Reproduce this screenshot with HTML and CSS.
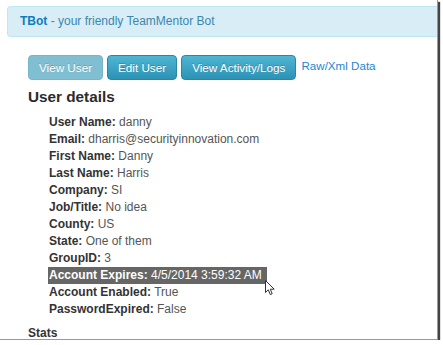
FILE: index.html
```html
<!DOCTYPE html>
<html>
<head>
<meta charset="utf-8">
<link rel="stylesheet" href="styles.css">
</head>
<body>
<div class="shot">
  <div class="alert"><a class="brand">TBot</a> - your friendly TeamMentor Bot</div>
  <div class="content">
    <div class="toolbar">
      <button class="btn btn-active">View User</button>
      <button class="btn">Edit User</button>
      <button class="btn">View Activity/Logs</button>
      <a class="raw">Raw/Xml Data</a>
    </div>
    <h3 class="heading">User details</h3>
    <ul class="details">
      <li><b>User Name:</b> danny</li>
      <li><b>Email:</b> dharris@securityinnovation.com</li>
      <li><b>First Name:</b> Danny</li>
      <li><b>Last Name:</b> Harris</li>
      <li><b>Company:</b> SI</li>
      <li><b>Job/Title:</b> No idea</li>
      <li><b>County:</b> US</li>
      <li><b>State:</b> One of them</li>
      <li><b>GroupID:</b> 3</li>
      <li><span class="selected"><b>Account Expires:</b> 4/5/2014 3:59:32 AM</span>
        <svg class="cursor" width="11" height="16" viewBox="0 0 11 16"><path d="M0.5 0.5 L0.5 12.5 L3.3 9.8 L5.3 14.6 L7.2 13.8 L5.3 9.2 L9.2 9.2 Z" fill="#fff" stroke="#333" stroke-width="1" stroke-linejoin="round"/></svg>
      </li>
      <li><b>Account Enabled:</b> True</li>
      <li><b>PasswordExpired:</b> False</li>
    </ul>
    <h4 class="stats">Stats</h4>
  </div>
</div>
</body>
</html>
```
FILE: styles.css
```css
html, body {
  margin: 0;
  padding: 0;
  background: #fff;
}
body {
  font-family: "Liberation Sans", Arial, sans-serif;
  color: #333;
}
.shot {
  width: 437px;
  height: 339px;
  border-right: 1px solid #999;
  border-bottom: 1px solid #999;
  box-shadow: 2px 2px 1px #444;
  overflow: hidden;
  box-sizing: content-box;
}
.alert {
  margin: 6px 0 0 7px;
  height: 29px;
  line-height: 29px;
  padding-left: 12px;
  background: #d9edf7;
  border: 1px solid #bce8f1;
  border-right: none;
  border-radius: 4px 0 0 4px;
  font-size: 12px;
  color: #3a87ad;
}
.brand {
  font-weight: bold;
  color: #0c7cc2;
}
.content {
  padding-left: 28px;
}
.toolbar {
  margin-top: 18px;
  display: flex;
  align-items: flex-start;
  gap: 4px;
  height: 25px;
}
.btn {
  height: 25px;
  padding: 0 10px;
  margin: 0;
  font-family: "Liberation Sans", Arial, sans-serif;
  font-size: 11.7px;
  color: #fff;
  text-shadow: 0 -1px 0 rgba(0,0,0,0.2);
  background: linear-gradient(#4fb5d5, #2c93b4);
  border: 1px solid #2a86a5;
  border-radius: 4px;
  line-height: 23px;
}
.btn-active {
  background: #80bfd1;
  border-color: #77b5c8;
}
.raw {
  margin-left: 1px;
  font-size: 11.6px;
  line-height: 22px;
  color: #1f86cf;
}
.heading {
  margin: 8px 0 0 0;
  font-size: 15.3px;
  line-height: 18px;
  font-weight: bold;
  color: #2b2b2b;
}
.details {
  list-style: none;
  margin: 8px 0 0 0;
  padding: 0 0 0 21px;
  font-size: 12px;
  line-height: 17px;
  color: #555;
}
.details li {
  position: relative;
  height: 17px;
}
.details b {
  color: #333;
}
.selected {
  display: inline-block;
  margin-left: -1px;
  padding: 0 5px 0 1px;
  background: #666;
  color: #fff;
}
.selected b {
  color: #fff;
}
.cursor {
  position: absolute;
  left: 216px;
  top: 13px;
}
.stats {
  margin: 7px 0 0 0;
  font-size: 12px;
  line-height: 17px;
  font-weight: bold;
  color: #333;
}
```
